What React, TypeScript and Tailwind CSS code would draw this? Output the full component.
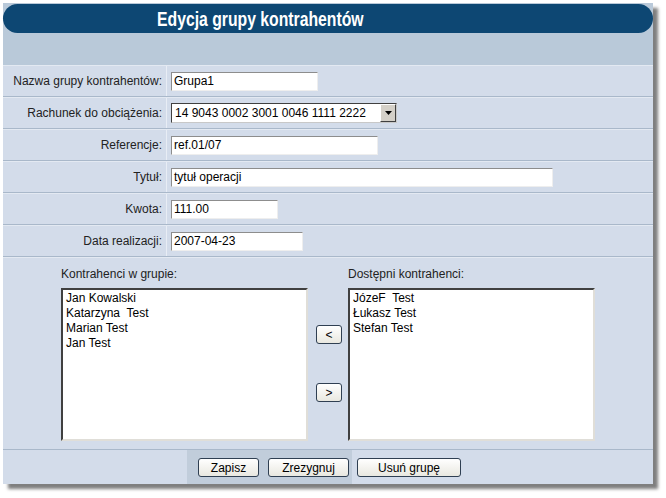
const font = { fontFamily: '"Liberation Sans", Arial, sans-serif' }

function Row({ label, children }: { label: string; children: React.ReactNode }) {
  return (
    <div className="flex h-[32px] border-t border-b border-t-[#e3e9f2] border-b-[#a9b8ca]">
      <div className="flex w-[164px] items-center justify-end border-r border-r-[#e8edf5] pr-[4px] text-[12px] text-[#222]">
        {label}
      </div>
      <div className="flex items-center pl-[4px]">{children}</div>
    </div>
  )
}

function Field({ value, w }: { value: string; w: string }) {
  return (
    <div
      className={`${w} flex h-[19px] items-center border border-t-[#8d8d8d] border-l-[#8d8d8d] border-r-[#eeeeee] border-b-[#eeeeee] bg-white pl-[2px] text-[12px] text-black`}
    >
      {value}
    </div>
  )
}

function Btn({ label, w }: { label: string; w: string }) {
  return (
    <div
      className={`${w} flex h-[19px] items-center justify-center rounded-[3px] border border-[#2f3f52] bg-gradient-to-b from-white to-[#e9e8e0] text-[12px] text-black`}
    >
      {label}
    </div>
  )
}

function ListBox({ items }: { items: string[] }) {
  return (
    <div className="h-[153px] w-[247px] border-2 border-t-[#404040] border-l-[#404040] border-r-[#e0ded8] border-b-[#e0ded8] bg-white pl-[3px] pt-[1px] text-[12px] leading-[15px] text-black">
      {items.map((it) => (
        <div key={it} className="whitespace-pre">
          {it}
        </div>
      ))}
    </div>
  )
}

export default function App() {
  return (
    <div className="h-[498px] w-[666px] bg-white pl-[3px] pt-[3px]" style={font}>
      <div className="w-[650px] bg-[#d3dcea] shadow-[5px_5px_3px_rgba(0,0,0,0.5)]">
        <div className="h-[62px] bg-[#b9c9d9] pt-[1px]">
          <div className="flex h-[29px] items-center rounded-full bg-[#0d4773] pl-[154px]">
            <span className="inline-block origin-left scale-x-[0.75] text-[21px] font-bold text-white">
              Edycja grupy kontrahentów
            </span>
          </div>
        </div>

        <Row label="Nazwa grupy kontrahentów:">
          <Field value="Grupa1" w="w-[147px]" />
        </Row>
        <Row label="Rachunek do obciążenia:">
          <div className="flex h-[20px] w-[226px] items-center border border-t-[#404040] border-l-[#404040] border-r-[#c8c8c8] border-b-[#c8c8c8] bg-white text-[12px] text-black">
            <span className="flex-1 pl-[3px]">14 9043 0002 3001 0046 1111 2222</span>
            <div className="flex h-[18px] w-[16px] items-center justify-center border border-t-white border-l-white border-r-[#404040] border-b-[#404040] bg-[#d4d0c8]">
              <svg width="7" height="4" viewBox="0 0 7 4">
                <path d="M0 0h7L3.5 4z" fill="#000" />
              </svg>
            </div>
          </div>
        </Row>
        <Row label="Referencje:">
          <Field value="ref.01/07" w="w-[207px]" />
        </Row>
        <Row label="Tytuł:">
          <Field value="tytuł operacji" w="w-[382px]" />
        </Row>
        <Row label="Kwota:">
          <Field value="111.00" w="w-[107px]" />
        </Row>
        <Row label="Data realizacji:">
          <Field value="2007-04-23" w="w-[132px]" />
        </Row>

        <div className="flex border-t border-b border-t-[#e3e9f2] border-b-[#a9b8ca] pb-[8px] pl-[58px] pt-[9px]">
          <div>
            <div className="h-[14px] text-[12px] leading-[14px] text-[#222]">Kontrahenci w grupie:</div>
            <div className="mt-[7px]">
              <ListBox items={['Jan Kowalski', 'Katarzyna  Test', 'Marian Test', 'Jan Test']} />
            </div>
          </div>
          <div className="flex w-[40px] flex-col items-center pl-[2px] pt-[58px]">
            <Btn label="<" w="w-[26px]" />
            <div className="mt-[39px]">
              <Btn label=">" w="w-[26px]" />
            </div>
          </div>
          <div>
            <div className="h-[14px] text-[12px] leading-[14px] text-[#222]">Dostępni kontrahenci:</div>
            <div className="mt-[7px]">
              <ListBox items={['JózeF  Test', 'Łukasz Test', 'Stefan Test']} />
            </div>
          </div>
        </div>

        <div className="flex h-[34px] items-stretch pl-[184px]">
          <div className="flex items-center gap-[9px] bg-[#c1cddb] pl-[11px] pr-[3px] pt-[1px]">
            <Btn label="Zapisz" w="w-[61px]" />
            <Btn label="Zrezygnuj" w="w-[81px]" />
          </div>
          <div className="flex items-center pl-[5px] pt-[1px]">
            <Btn label="Usuń grupę" w="w-[104px]" />
          </div>
        </div>
      </div>
    </div>
  )
}
